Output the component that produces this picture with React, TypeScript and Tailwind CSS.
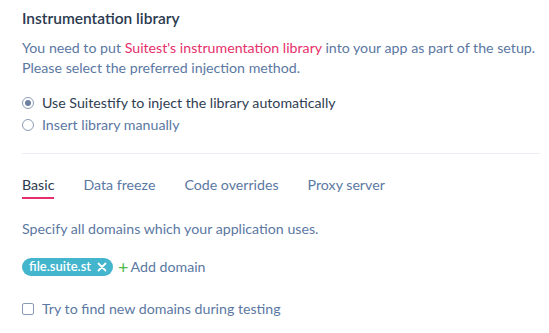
import React, { useState } from "react";

const tabs = ["Basic", "Data freeze", "Code overrides", "Proxy server"];

function Radio({ checked, label }: { checked: boolean; label: string }) {
    return (
        <label className="flex items-center gap-[8px] h-[22px] text-[14.2px] text-[#2f3d52]">
            <span className="w-[12px] h-[12px] rounded-full border border-[#8a9bb5] flex items-center justify-center bg-white">
                {checked && <span className="w-[6px] h-[6px] rounded-full bg-[#6b7f9e]" />}
            </span>
            <span className={checked ? "text-[#2f3d52]" : "text-[#5b78a3]"}>{label}</span>
        </label>
    );
}

export default function App() {
    const [active] = useState(0);
    return (
        <main className="w-[549px] h-[333px] bg-white px-[22px] pt-[7px] font-['Lato',sans-serif]">
            <h1 className="text-[15.5px] leading-[22px] font-semibold text-[#2b3a4f]">Instrumentation library</h1>
            <p className="mt-[9px] text-[14.2px] leading-[20px] text-[#5b78a3] whitespace-nowrap">
                You need to put <span className="text-[#e5306b]">Suitest's instrumentation library</span> into your app as part of the setup.
                <br />
                Please select the preferred injection method.
            </p>
            <div className="mt-[14px] flex flex-col">
                <Radio checked label="Use Suitestify to inject the library automatically" />
                <Radio checked={false} label="Insert library manually" />
            </div>
            <div className="mt-[17px] w-[518px] border-t border-[#eceef5]" />
            <div className="mt-[21px] flex gap-[29px] text-[14.2px] leading-[20px]">
                {tabs.map((t, i) => (
                    <div key={t} className={i === active ? "text-[#2b3a4f] border-b-2 border-[#e5306b] pb-[2px]" : "text-[#5b78a3] pb-[2px]"}>
                        {t}
                    </div>
                ))}
            </div>
            <p className="mt-[20px] text-[14.2px] leading-[20px] text-[#5b78a3]">Specify all domains which your application uses.</p>
            <div className="mt-[17px] flex items-center gap-[5px]">
                <span className="flex items-center gap-[6px] h-[18px] pl-[7px] pr-[6px] rounded-full bg-[#43b5cd] text-white text-[13px] font-semibold">
                    file.suite.st
                    <svg width="10" height="10" viewBox="0 0 10 10">
                        <path d="M1.5 1.5 L8.5 8.5 M8.5 1.5 L1.5 8.5" stroke="white" strokeWidth="1.8" strokeLinecap="round" />
                    </svg>
                </span>
                <span className="flex items-center text-[14.2px] text-[#5b78a3]">
                    <span className="text-[#4cbb4c] text-[18px] leading-none mr-[2px]">+</span>
                    Add domain
                </span>
            </div>
            <label className="mt-[21px] flex items-center gap-[8px] text-[14.2px] text-[#5b78a3]">
                <span className="w-[12px] h-[12px] rounded-[2px] border border-[#8a9bb5] bg-white" />
                Try to find new domains during testing
            </label>
        </main>
    );
}
